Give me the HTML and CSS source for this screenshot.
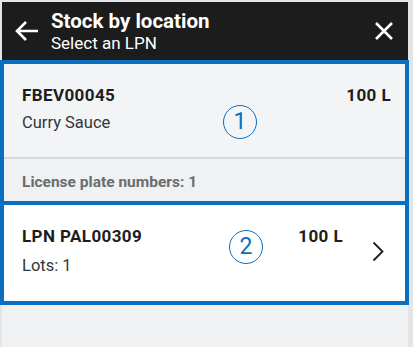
FILE: index.html
```html
<!DOCTYPE html>
<html lang="en">
<head>
    <meta charset="UTF-8">
    <meta name="viewport" content="width=device-width, initial-scale=1.0">
    <title>Stock by location</title>
    <link rel="stylesheet" href="styles.css">
</head>
<body>
<div class="screen">
    <header class="app-header">
        <svg class="back-icon" width="26" height="22" viewBox="0 0 26 22">
            <path d="M24 11H3M12 2L3 11l9 9" fill="none" stroke="#fff" stroke-width="2.6"/>
        </svg>
        <div class="titles">
            <div class="title">Stock by location</div>
            <div class="subtitle">Select an LPN</div>
        </div>
        <svg class="close-icon" width="20" height="20" viewBox="0 0 20 20">
            <path d="M2 2l16 16M18 2L2 18" fill="none" stroke="#fff" stroke-width="2.6"/>
        </svg>
    </header>

    <section class="mark-box product-box">
        <div class="product">
            <div class="row">
                <span class="strong">FBEV00045</span>
                <span class="strong">100 L</span>
            </div>
            <div class="desc">Curry Sauce</div>
        </div>
        <div class="group-head">License plate numbers: 1</div>
        <span class="marker marker-1">1</span>
    </section>

    <section class="mark-box lpn-box">
        <div class="lpn-text">
            <div class="strong">LPN PAL00309</div>
            <div class="desc lots">Lots: 1</div>
        </div>
        <div class="strong qty">100 L</div>
        <svg class="chevron" width="12" height="21" viewBox="0 0 12 21">
            <path d="M1.5 1.5l9 9-9 9" fill="none" stroke="#1d1d1d" stroke-width="1.8"/>
        </svg>
        <span class="marker marker-2">2</span>
    </section>
</div>
</body>
</html>
```

FILE: styles.css
```css
body {
    margin: 0;
    background-color: #e3e4e5;
    font-family: Roboto, 'Liberation Sans', sans-serif;
}

.screen {
    margin: 2px 5px 0 2px;
    height: 345px;
    background-color: #eff1f2;
}

.app-header {
    display: flex;
    align-items: center;
    height: 58px;
    background-color: #1c1c1c;
    color: #fff;
}

.back-icon {
    margin: 0 11px 0 12px;
}

.titles {
    flex: 1;
}

.title {
    font-size: 20.5px;
    font-weight: 700;
    line-height: 24px;
}

.subtitle {
    font-size: 17px;
    line-height: 20px;
}

.close-icon {
    margin-right: 14px;
}

.mark-box {
    position: relative;
    margin: 0 -1px 0 -2px;
    border: 4px solid #0a6fc1;
}

.product-box {
    background-color: #f2f4f5;
}

.product {
    padding: 21px 14px 0 18px;
    height: 72px;
    border-bottom: 2px solid #d6d8da;
    box-shadow: 0 2px 0 #e4e6e8;
}

.row {
    display: flex;
    justify-content: space-between;
}

.strong {
    font-size: 17px;
    font-weight: 700;
    letter-spacing: 0.4px;
    line-height: 20px;
    color: #1d1d1d;
}

.desc {
    margin-top: 8px;
    font-size: 16.5px;
    line-height: 20px;
    color: #32363a;
}

.group-head {
    padding: 14px 18px 0;
    height: 28px;
    font-size: 15.5px;
    font-weight: 700;
    line-height: 18px;
    color: #6a6d70;
    background-color: #eff1f2;
}

.lpn-box {
    display: flex;
    align-items: flex-start;
    border-top: none;
    height: 96px;
    background-color: #fff;
}

.lpn-text {
    flex: 1;
    padding: 21px 0 0 18px;
}

.lots {
    margin-top: 10px;
}

.qty {
    padding-top: 21px;
}

.chevron {
    margin: 36px 21px 0 29px;
}

.marker {
    position: absolute;
    width: 32px;
    height: 32px;
    border: 1.6px solid #0a6fc1;
    border-radius: 50%;
    color: #0a6fc1;
    font-size: 23px;
    line-height: 32px;
    text-align: center;
}

.marker-1 {
    left: 219px;
    top: 41px;
}

.marker-2 {
    left: 225px;
    top: 25px;
}
```
